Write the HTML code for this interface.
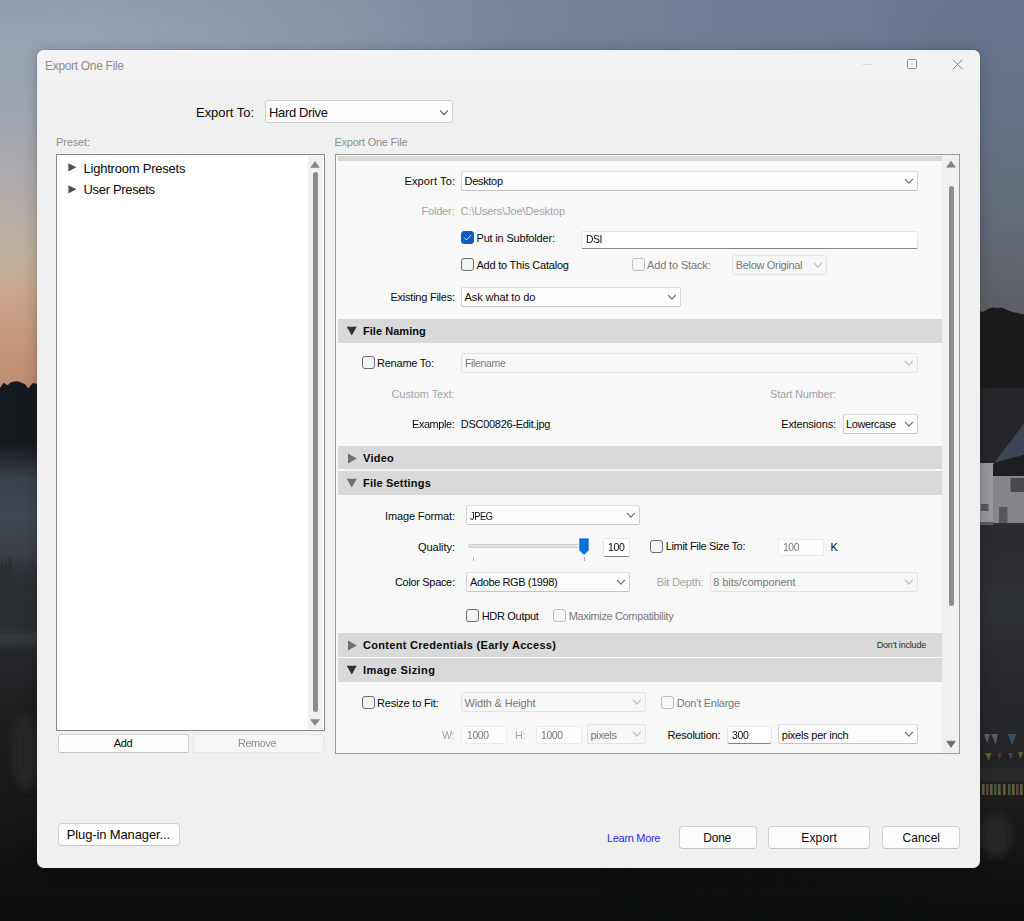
<!DOCTYPE html>
<html>
<head>
<meta charset="utf-8">
<title>Export One File</title>
<style>
*{box-sizing:border-box;margin:0;padding:0}
html,body{width:1024px;height:921px;overflow:hidden}
body{font-family:"Liberation Sans",sans-serif;position:relative;background:#15171a}
.a{position:absolute}
.t{position:absolute;white-space:pre}
#dlg{position:absolute;left:37px;top:50px;width:943px;height:818px;background:#f0f0f0;border-radius:7px;overflow:hidden;box-shadow:0 0 0 1px rgba(40,40,40,.12),0 2px 16px rgba(0,0,0,.22)}
#tbar{position:absolute;left:0;top:0;width:943px;height:30px;background:#f3f3f3}
.sel{position:absolute;background:#fdfdfd;border:1px solid #d2d2d2;border-top-color:#dedede;border-bottom-color:#c4c4c4;border-radius:2.5px}
.sel.dis{background:#f7f7f7;border-color:#e3e3e3}
.inp{position:absolute;background:#fff;border:1px solid #e6e6e6;border-bottom:1px solid #858585;border-radius:2px}
.inp.dis{background:#fdfdfd;border-color:#ebebeb}
.cb{position:absolute;width:13px;height:13px;border:1px solid #6c6c6c;border-radius:3px;background:#f4f4f4}
.cb.dis{border-color:#bcbcbc;background:#f8f8f8}
.cb.on{background:#0a5ebe;border-color:#0a5ebe}
.hdr{position:absolute;left:338px;width:604px;background:#d9d9d9}
.btn{position:absolute;background:#fdfdfd;border:1px solid #d2d2d2;border-bottom-color:#c4c4c4}
.btn.dis{background:#f6f6f6;border-color:#e6e6e6}
</style>
</head>
<body>
<svg id="bg" width="1024" height="921" viewBox="0 0 1024 921" style="position:absolute;left:0;top:0">
<defs>
<linearGradient id="skyh" x1="0" y1="0" x2="1" y2="0">
<stop offset="0" stop-color="#929eb0"/><stop offset=".25" stop-color="#8492a6"/><stop offset=".5" stop-color="#76859c"/><stop offset=".75" stop-color="#6d7d95"/><stop offset="1" stop-color="#66768f"/>
</linearGradient>
<linearGradient id="skyl" x1="0" y1="0" x2="0" y2="400" gradientUnits="userSpaceOnUse">
<stop offset="0" stop-color="#909dae"/><stop offset=".1" stop-color="#96a3b4"/><stop offset=".27" stop-color="#9ea6b1"/><stop offset=".40" stop-color="#a9aaae"/><stop offset=".53" stop-color="#b5ada6"/><stop offset=".64" stop-color="#c0af9c"/><stop offset=".725" stop-color="#c8a78f"/><stop offset=".81" stop-color="#c69d82"/><stop offset=".88" stop-color="#c29478"/><stop offset="1" stop-color="#bb8c71"/>
</linearGradient>
<linearGradient id="lfade" x1="0" y1="0" x2="520" y2="0" gradientUnits="userSpaceOnUse">
<stop offset="0" stop-color="#fff" stop-opacity="1"/><stop offset=".08" stop-color="#fff" stop-opacity="1"/><stop offset="1" stop-color="#fff" stop-opacity="0"/>
</linearGradient>
<mask id="lmask"><rect x="0" y="0" width="520" height="400" fill="url(#lfade)"/></mask>
<linearGradient id="topfade" x1="0" y1="0" x2="0" y2="120" gradientUnits="userSpaceOnUse">
<stop offset="0" stop-color="#000" stop-opacity="0"/><stop offset=".35" stop-color="#000" stop-opacity="0"/><stop offset="1" stop-color="#000" stop-opacity="0"/>
</linearGradient>
<linearGradient id="skyr" x1="0" y1="0" x2="0" y2="320" gradientUnits="userSpaceOnUse">
<stop offset="0" stop-color="#66768f"/><stop offset=".3" stop-color="#65738a"/><stop offset=".5" stop-color="#646f81"/><stop offset=".7" stop-color="#626a78"/><stop offset=".85" stop-color="#60646d"/><stop offset="1" stop-color="#5c5d63"/>
</linearGradient>
<linearGradient id="rfade" x1="880" y1="0" x2="1024" y2="0" gradientUnits="userSpaceOnUse">
<stop offset="0" stop-color="#fff" stop-opacity="0"/><stop offset=".6" stop-color="#fff" stop-opacity="1"/><stop offset="1" stop-color="#fff" stop-opacity="1"/>
</linearGradient>
<mask id="rmask"><rect x="880" y="0" width="144" height="400" fill="url(#rfade)"/></mask>
<linearGradient id="landl" x1="0" y1="380" x2="0" y2="921" gradientUnits="userSpaceOnUse">
<stop offset="0" stop-color="#151a1e"/><stop offset=".115" stop-color="#161a1e"/><stop offset=".15" stop-color="#272c33"/><stop offset=".185" stop-color="#3c424b"/><stop offset=".25" stop-color="#424852"/><stop offset=".32" stop-color="#3b4048"/><stop offset=".36" stop-color="#2c3035"/><stop offset=".46" stop-color="#2a2d31"/><stop offset=".475" stop-color="#363b40"/><stop offset=".50" stop-color="#25282b"/><stop offset=".6" stop-color="#1d1f20"/><stop offset=".75" stop-color="#181a19"/><stop offset=".9" stop-color="#0e110e"/><stop offset="1" stop-color="#0b0e0b"/>
</linearGradient>
<linearGradient id="landr" x1="0" y1="380" x2="0" y2="921" gradientUnits="userSpaceOnUse">
<stop offset="0" stop-color="#26262a"/><stop offset=".3" stop-color="#2a2c30"/><stop offset=".42" stop-color="#2d3035"/><stop offset=".55" stop-color="#27292c"/><stop offset=".7" stop-color="#222324"/><stop offset=".8" stop-color="#1b1c1a"/><stop offset=".9" stop-color="#101310"/><stop offset="1" stop-color="#0b0e0b"/>
</linearGradient>
<linearGradient id="lrfade" x1="600" y1="0" x2="1024" y2="0" gradientUnits="userSpaceOnUse">
<stop offset="0" stop-color="#fff" stop-opacity="0"/><stop offset=".8" stop-color="#fff" stop-opacity="1"/><stop offset="1" stop-color="#fff" stop-opacity="1"/>
</linearGradient>
<mask id="lrmask"><rect x="600" y="300" width="424" height="621" fill="url(#lrfade)"/></mask>
<filter id="bl" x="-50%" y="-50%" width="200%" height="200%"><feGaussianBlur stdDeviation="4"/></filter>
<filter id="bl1" x="-20%" y="-20%" width="140%" height="140%"><feGaussianBlur stdDeviation="0.6"/></filter>
</defs>
<rect x="0" y="0" width="1024" height="400" fill="url(#skyh)"/>
<rect x="0" y="0" width="520" height="400" fill="url(#skyl)" mask="url(#lmask)"/>
<rect x="880" y="0" width="144" height="400" fill="url(#skyr)" mask="url(#rmask)"/>
<rect x="0" y="389" width="1024" height="532" fill="url(#landl)"/>
<rect x="600" y="314" width="424" height="607" fill="url(#landr)" mask="url(#lrmask)"/>
<path d="M0 388 L2 385 L4 382.8 L6 384.5 L8 385 L10 382.8 L13 381.8 L17 381.2 L20 382 L22 383 L25 384 L27 387 L28.5 388.3 L30 386 L33 383 L36 383.8 L40 383 L700 383 L700 392 L0 392 Z" fill="#151a1e"/>
<path d="M0 566 L2 560 L4 566 L6 558 L8 566 L10 555 L12 565 L14 572 L18 580 L24 581 L30 580 L36 579 L40 580 L40 590 L0 590 Z" fill="#2b2f34"/>
<ellipse cx="26" cy="752" rx="14" ry="38" fill="#262826" filter="url(#bl)"/>
<path d="M975 312 L980 311 L983 312 L988 309 L992 307.6 L997 308 L1002 307.6 L1007 310 L1012 312 L1018 313 L1024 315 L1024 390 L975 390 Z" fill="#1a1c1c"/>
<rect x="975" y="388" width="49" height="90" fill="#26262a"/>
<path d="M1024 423.5 L994 463 L1024 455 Z" fill="#3c4658"/>
<path d="M987 474 L994 463 L1024 455 L1024 476 L987 476 Z" fill="#1e1e22"/>
<rect x="980" y="463" width="13" height="59" fill="#98989e"/>
<path d="M980 463 L994 463 L987 474 L980 474 Z" fill="#98989e"/>
<rect x="993" y="476" width="31" height="49" fill="#85858b"/>
<rect x="1010.5" y="478" width="14" height="14" fill="#48484e"/>
<rect x="999" y="507" width="8.5" height="18" fill="#55585c"/>
<rect x="981" y="504" width="7.5" height="7" fill="#5a5a60"/>
<rect x="975" y="523" width="49" height="18" fill="#2c2c30" opacity=".95"/>
<rect x="980" y="522" width="13" height="3" fill="#5a5a60"/>
<g filter="url(#bl1)" opacity=".62">
<path d="M984 734 L990 734 L987 743 Z M991 734 L997.5 734 L996 745 Z" fill="#7e8288"/>
<path d="M1008 734 L1016.6 734 L1012 745 Z" fill="#4a6a90"/>
<path d="M985.5 753 L991.5 753 L988.5 761 Z" fill="#85852e"/><path d="M997 753 L1002 753 L999.5 760 Z" fill="#6a3a44"/><path d="M1008 753 L1013 753 L1010.5 760 Z" fill="#4a5a7a"/><path d="M1018 752 L1023 752 L1020.5 759 Z" fill="#85852e"/>
<rect x="975" y="768" width="49" height="14" fill="#2e2e30"/>
<rect x="982" y="784" width="2.6" height="11" fill="#8a8640"/>
<rect x="986" y="784" width="2.6" height="11" fill="#7a5a68"/>
<rect x="990" y="784" width="2.6" height="11" fill="#8a8640"/>
<rect x="994" y="784" width="2.6" height="11" fill="#5a7a5a"/>
<rect x="998" y="784" width="2.6" height="11" fill="#8a8640"/>
<rect x="1003" y="784" width="2.6" height="11" fill="#8a8640"/>
<rect x="1008" y="784" width="2.6" height="11" fill="#5a7a5a"/>
<rect x="1012" y="784" width="2.6" height="11" fill="#8a8640"/>
<rect x="1016" y="784" width="2.6" height="11" fill="#7a5a68"/>
<rect x="1020" y="784" width="2.6" height="11" fill="#8a8640"/>
</g>
<ellipse cx="996" cy="836" rx="16" ry="21" fill="#282828" filter="url(#bl)"/>
</svg>
<div id="dlg"><div id="tbar"></div></div>
<div class="sel" style="left:265px;top:100px;width:188px;height:23px;border-radius:3px;border-color:#cfcfcf"></div>
<svg class="a" style="left:437px;top:107px" width="14" height="10" viewBox="0 0 14 10"><path d="M3.50 3.90 L7.00 7.70 L10.50 3.90" fill="none" stroke="#555" stroke-width="1.2" stroke-linecap="round" stroke-linejoin="round"/></svg>
<div class="a" style="left:56px;top:154px;width:269px;height:577px;background:#fff;border:1px solid #888"></div>
<div class="a" style="left:308px;top:156px;width:15px;height:573px;background:#f0f0f0"></div>
<svg class="a" style="left:310px;top:161px" width="10" height="7" viewBox="0 0 10 7"><path d="M0.6 6.6 L5 0.4 L9.4 6.6 Z" fill="#858585" stroke="#858585" stroke-width=".6" stroke-linejoin="round"/></svg>
<div class="a" style="left:313px;top:172px;width:5px;height:540px;background:#8c8c8c;border-radius:2.5px"></div>
<svg class="a" style="left:310px;top:719px" width="10" height="7" viewBox="0 0 10 7"><path d="M0.6 0.6 L9.4 0.6 L5 6.4 Z" fill="#858585" stroke="#858585" stroke-width=".6" stroke-linejoin="round"/></svg>
<svg class="a" style="left:68px;top:163px" width="9" height="9" viewBox="0 0 9 9"><path d="M0.4 0.3 L8.4 4.3 L0.4 8.4 Z" fill="#505050"/></svg>
<svg class="a" style="left:68px;top:184.5px" width="9" height="9" viewBox="0 0 9 9"><path d="M0.4 0.3 L8.4 4.3 L0.4 8.4 Z" fill="#505050"/></svg>
<div class="a" style="left:335px;top:154px;width:625px;height:600px;background:#f8f8f8;border:1px solid #999"></div>
<div class="a" style="left:942px;top:155px;width:17px;height:598px;background:#f0f0f0"></div>
<svg class="a" style="left:946px;top:160px" width="10" height="8" viewBox="0 0 10 8"><path d="M0.6 7.2 L5 1 L9.4 7.2 Z" fill="#858585" stroke="#858585" stroke-width=".6" stroke-linejoin="round"/></svg>
<div class="a" style="left:948.5px;top:186px;width:5px;height:420px;background:#8c8c8c;border-radius:2.5px"></div>
<svg class="a" style="left:946px;top:740px" width="10" height="8" viewBox="0 0 10 8"><path d="M0.6 1.2 L9.4 1.2 L5 7.4 Z" fill="#6a6a6a" stroke="#6a6a6a" stroke-width=".6" stroke-linejoin="round"/></svg>
<div class="hdr" style="top:156px;height:5px"></div>
<div class="sel" style="left:461px;top:171px;width:457px;height:20px"></div>
<svg class="a" style="left:901px;top:176px" width="14" height="10" viewBox="0 0 14 10"><path d="M4.40 3.30 L7.90 7.10 L11.40 3.30" fill="none" stroke="#6c6c6c" stroke-width="1.2" stroke-linecap="round" stroke-linejoin="round"/></svg>
<div class="cb on" style="left:461px;top:231px"></div>
<svg class="a" style="left:461px;top:231px" width="13" height="13" viewBox="0 0 13 13"><path d="M3.2 6.7 L5.5 9 L9.9 4.2" fill="none" stroke="#fff" stroke-opacity=".9" stroke-width=".95" stroke-linecap="round" stroke-linejoin="round"/></svg>
<div class="inp" style="left:581px;top:231px;width:337px;height:18px"></div>
<div class="cb " style="left:461px;top:258px"></div>
<div class="cb dis" style="left:631.5px;top:258px"></div>
<div class="sel dis" style="left:732px;top:255px;width:95px;height:20px"></div>
<svg class="a" style="left:810px;top:260px" width="14" height="10" viewBox="0 0 14 10"><path d="M4.40 3.30 L7.90 7.10 L11.40 3.30" fill="none" stroke="#bcbcbc" stroke-width="1.2" stroke-linecap="round" stroke-linejoin="round"/></svg>
<div class="sel" style="left:461px;top:287px;width:220px;height:20px"></div>
<svg class="a" style="left:664px;top:292px" width="14" height="10" viewBox="0 0 14 10"><path d="M4.40 3.30 L7.90 7.10 L11.40 3.30" fill="none" stroke="#6c6c6c" stroke-width="1.2" stroke-linecap="round" stroke-linejoin="round"/></svg>
<div class="hdr" style="top:319px;height:24px"></div>
<svg class="a" style="left:345px;top:325px" width="14" height="13" viewBox="0 0 14 13"><path d="M1.75 1.8 L11.75 1.8 L6.75 10.5 Z" fill="#333"/></svg>
<div class="cb " style="left:362px;top:356px"></div>
<div class="sel dis" style="left:461px;top:353px;width:457px;height:20px"></div>
<svg class="a" style="left:901px;top:358px" width="14" height="10" viewBox="0 0 14 10"><path d="M4.40 3.30 L7.90 7.10 L11.40 3.30" fill="none" stroke="#bcbcbc" stroke-width="1.2" stroke-linecap="round" stroke-linejoin="round"/></svg>
<div class="sel" style="left:843px;top:414px;width:75px;height:20px"></div>
<svg class="a" style="left:901px;top:419px" width="14" height="10" viewBox="0 0 14 10"><path d="M4.40 3.30 L7.90 7.10 L11.40 3.30" fill="none" stroke="#6c6c6c" stroke-width="1.2" stroke-linecap="round" stroke-linejoin="round"/></svg>
<div class="hdr" style="top:446px;height:23px"></div>
<svg class="a" style="left:347px;top:452px" width="12" height="14" viewBox="0 0 12 14"><path d="M1 1.4 L9.8 6.5 L1 11.6 Z" fill="#707070"/></svg>
<div class="hdr" style="top:471px;height:24px"></div>
<svg class="a" style="left:345px;top:477px" width="14" height="13" viewBox="0 0 14 13"><path d="M1.75 1.8 L11.75 1.8 L6.75 10.5 Z" fill="#707070"/></svg>
<div class="sel" style="left:466px;top:505px;width:174px;height:20px"></div>
<svg class="a" style="left:623px;top:510px" width="14" height="10" viewBox="0 0 14 10"><path d="M4.40 3.30 L7.90 7.10 L11.40 3.30" fill="none" stroke="#6c6c6c" stroke-width="1.2" stroke-linecap="round" stroke-linejoin="round"/></svg>
<div class="a" style="left:468px;top:544px;width:116px;height:4px;background:#e2e2e2;border:1px solid #cfcfcf;border-radius:2px"></div>
<svg class="a" style="left:578px;top:537px" width="12" height="20" viewBox="0 0 12 20"><path d="M1 1.8 Q1 1.1 1.7 1.1 L10.3 1.1 Q11 1.1 11 1.8 L11 13.5 L6 18.2 L1 13.5 Z" fill="#0672d6" stroke="#fff" stroke-opacity=".85" stroke-width=".7"/></svg>
<div class="a" style="left:473px;top:557px;width:1px;height:4px;background:#b8b8b8"></div>
<div class="a" style="left:584px;top:557px;width:1px;height:4px;background:#a8a8a8"></div>
<div class="inp" style="left:602.5px;top:538px;width:27.0px;height:19px"></div>
<div class="cb " style="left:650px;top:540px"></div>
<div class="inp dis" style="left:777.5px;top:539px;width:46.0px;height:17px"></div>
<div class="sel" style="left:466px;top:572px;width:164px;height:20px"></div>
<svg class="a" style="left:613px;top:577px" width="14" height="10" viewBox="0 0 14 10"><path d="M4.40 3.30 L7.90 7.10 L11.40 3.30" fill="none" stroke="#6c6c6c" stroke-width="1.2" stroke-linecap="round" stroke-linejoin="round"/></svg>
<div class="sel dis" style="left:710px;top:572px;width:208px;height:20px"></div>
<svg class="a" style="left:901px;top:577px" width="14" height="10" viewBox="0 0 14 10"><path d="M4.40 3.30 L7.90 7.10 L11.40 3.30" fill="none" stroke="#bcbcbc" stroke-width="1.2" stroke-linecap="round" stroke-linejoin="round"/></svg>
<div class="cb " style="left:466px;top:609px"></div>
<div class="cb dis" style="left:553px;top:609px"></div>
<div class="hdr" style="top:633px;height:24px"></div>
<svg class="a" style="left:347px;top:639px" width="12" height="14" viewBox="0 0 12 14"><path d="M1 1.4 L9.8 6.5 L1 11.6 Z" fill="#707070"/></svg>
<div class="hdr" style="top:658px;height:24px"></div>
<svg class="a" style="left:345px;top:664px" width="14" height="13" viewBox="0 0 14 13"><path d="M1.75 1.8 L11.75 1.8 L6.75 10.5 Z" fill="#333"/></svg>
<div class="cb " style="left:362px;top:696px"></div>
<div class="sel dis" style="left:461px;top:692px;width:185px;height:20px"></div>
<svg class="a" style="left:629px;top:697px" width="14" height="10" viewBox="0 0 14 10"><path d="M4.40 3.30 L7.90 7.10 L11.40 3.30" fill="none" stroke="#bcbcbc" stroke-width="1.2" stroke-linecap="round" stroke-linejoin="round"/></svg>
<div class="cb dis" style="left:661px;top:696px"></div>
<div class="inp dis" style="left:461px;top:726px;width:46px;height:18px"></div>
<div class="inp dis" style="left:535.5px;top:726px;width:46.0px;height:18px"></div>
<div class="sel dis" style="left:587px;top:724px;width:59px;height:20px"></div>
<svg class="a" style="left:629px;top:729px" width="14" height="10" viewBox="0 0 14 10"><path d="M4.40 3.30 L7.90 7.10 L11.40 3.30" fill="none" stroke="#bcbcbc" stroke-width="1.2" stroke-linecap="round" stroke-linejoin="round"/></svg>
<div class="inp" style="left:727px;top:726px;width:45px;height:18px"></div>
<div class="sel" style="left:778px;top:724px;width:140px;height:20px"></div>
<svg class="a" style="left:901px;top:729px" width="14" height="10" viewBox="0 0 14 10"><path d="M4.40 3.30 L7.90 7.10 L11.40 3.30" fill="none" stroke="#6c6c6c" stroke-width="1.2" stroke-linecap="round" stroke-linejoin="round"/></svg>
<div class="btn" style="left:58px;top:734px;width:131px;height:19px;border-radius:3px"></div>
<div class="btn dis" style="left:192.5px;top:734px;width:131.0px;height:18.5px;border-radius:3px"></div>
<div class="btn" style="left:57.5px;top:823px;width:122.5px;height:23px;border-radius:4px"></div>
<div class="btn" style="left:679px;top:826px;width:77.5px;height:23px;border-radius:4px"></div>
<div class="btn" style="left:768px;top:826px;width:102px;height:23px;border-radius:4px"></div>
<div class="btn" style="left:882px;top:826px;width:77.5px;height:23px;border-radius:4px"></div>
<div class="a" style="left:862px;top:64px;width:10px;height:1px;background:#dedede"></div>
<div class="a" style="left:907px;top:59px;width:10px;height:10px;border:1px solid #8c8c8c;border-radius:1.5px"></div>
<svg class="a" style="left:951px;top:58px" width="13" height="13" viewBox="0 0 13 13"><path d="M1.9 1.6 L11.4 11.2 M11.4 1.6 L1.9 11.2" stroke="#8a8a8a" stroke-width="1" fill="none"/></svg>
<div class="t" style="left:45.00px;top:60px;font-size:12px;line-height:12px;color:#8d8d8d;letter-spacing:-0.31px;">Export One File</div>
<div class="t" style="left:196.00px;top:106px;font-size:13px;line-height:13px;color:#0a0a0a;letter-spacing:-0.03px;">Export To:</div>
<div class="t" style="left:269.00px;top:106px;font-size:13px;line-height:13px;color:#0a0a0a;letter-spacing:-0.35px;">Hard Drive</div>
<div class="t" style="left:56.00px;top:137px;font-size:11px;line-height:11px;color:#8f8f8f;letter-spacing:-0.14px;">Preset:</div>
<div class="t" style="left:334.50px;top:137px;font-size:11px;line-height:11px;color:#8f8f8f;letter-spacing:-0.24px;">Export One File</div>
<div class="t" style="left:83.50px;top:162px;font-size:13px;line-height:13px;color:#0a0a0a;letter-spacing:-0.22px;">Lightroom Presets</div>
<div class="t" style="left:83.50px;top:183px;font-size:13px;line-height:13px;color:#0a0a0a;letter-spacing:-0.33px;">User Presets</div>
<div class="t" style="left:404.50px;top:176px;font-size:11px;line-height:11px;color:#0a0a0a;letter-spacing:0.13px;">Export To:</div>
<div class="t" style="left:464.50px;top:176px;font-size:11px;line-height:11px;color:#0a0a0a;letter-spacing:-0.31px;">Desktop</div>
<div class="t" style="left:421.50px;top:206px;font-size:11px;line-height:11px;color:#a4a4a4;letter-spacing:-0.21px;">Folder:</div>
<div class="t" style="left:460.50px;top:206px;font-size:11px;line-height:11px;color:#a4a4a4;letter-spacing:-0.13px;">C:\Users\Joe\Desktop</div>
<div class="t" style="left:476.50px;top:233px;font-size:11px;line-height:11px;color:#0a0a0a;letter-spacing:-0.18px;">Put in Subfolder:</div>
<div class="t" style="left:585.50px;top:234px;font-size:11px;line-height:11px;color:#0a0a0a;letter-spacing:-0.39px;transform:scaleX(0.9389);transform-origin:left center;">DSI</div>
<div class="t" style="left:476.50px;top:260px;font-size:11px;line-height:11px;color:#0a0a0a;letter-spacing:-0.22px;">Add to This Catalog</div>
<div class="t" style="left:647.00px;top:260px;font-size:11px;line-height:11px;color:#797979;letter-spacing:-0.14px;">Add to Stack:</div>
<div class="t" style="left:735.75px;top:260px;font-size:11px;line-height:11px;color:#797979;letter-spacing:-0.32px;">Below Original</div>
<div class="t" style="left:390.50px;top:292px;font-size:11px;line-height:11px;color:#0a0a0a;letter-spacing:-0.24px;">Existing Files:</div>
<div class="t" style="left:464.50px;top:292px;font-size:11px;line-height:11px;color:#0a0a0a;letter-spacing:-0.09px;">Ask what to do</div>
<div class="t" style="left:363.00px;top:326px;font-size:11px;line-height:11px;color:#0a0a0a;font-weight:bold;letter-spacing:0.04px;">File Naming</div>
<div class="t" style="left:377.00px;top:358px;font-size:11px;line-height:11px;color:#0a0a0a;letter-spacing:-0.23px;">Rename To:</div>
<div class="t" style="left:464.50px;top:358px;font-size:11px;line-height:11px;color:#797979;letter-spacing:-0.39px;transform:scaleX(0.9635);transform-origin:left center;">Filename</div>
<div class="t" style="left:391.50px;top:389px;font-size:11px;line-height:11px;color:#a4a4a4;letter-spacing:-0.09px;">Custom Text:</div>
<div class="t" style="left:770.00px;top:389px;font-size:11px;line-height:11px;color:#a4a4a4;letter-spacing:-0.21px;">Start Number:</div>
<div class="t" style="left:411.75px;top:419px;font-size:11px;line-height:11px;color:#0a0a0a;letter-spacing:-0.39px;transform:scaleX(0.9904);transform-origin:left center;">Example:</div>
<div class="t" style="left:460.75px;top:419px;font-size:11px;line-height:11px;color:#0a0a0a;letter-spacing:-0.28px;">DSC00826-Edit.jpg</div>
<div class="t" style="left:781.25px;top:419px;font-size:11px;line-height:11px;color:#0a0a0a;letter-spacing:-0.21px;">Extensions:</div>
<div class="t" style="left:846.00px;top:419px;font-size:11px;line-height:11px;color:#0a0a0a;letter-spacing:-0.37px;">Lowercase</div>
<div class="t" style="left:363.00px;top:453px;font-size:11px;line-height:11px;color:#0a0a0a;font-weight:bold;letter-spacing:0.25px;">Video</div>
<div class="t" style="left:363.00px;top:478px;font-size:11px;line-height:11px;color:#0a0a0a;font-weight:bold;letter-spacing:0.2px;">File Settings</div>
<div class="t" style="left:385.00px;top:511px;font-size:11px;line-height:11px;color:#0a0a0a;letter-spacing:-0.13px;">Image Format:</div>
<div class="t" style="left:470.00px;top:511px;font-size:11px;line-height:11px;color:#0a0a0a;letter-spacing:-0.39px;transform:scaleX(0.834);transform-origin:left center;">JPEG</div>
<div class="t" style="left:418.00px;top:542px;font-size:11px;line-height:11px;color:#0a0a0a;letter-spacing:-0.04px;">Quality:</div>
<div class="t" style="left:608.40px;top:542px;font-size:11px;line-height:11px;color:#0a0a0a;letter-spacing:-0.39px;transform:scaleX(0.9551);transform-origin:left center;">100</div>
<div class="t" style="left:665.75px;top:541px;font-size:11px;line-height:11px;color:#0a0a0a;letter-spacing:-0.35px;">Limit File Size To:</div>
<div class="t" style="left:783.00px;top:542px;font-size:11px;line-height:11px;color:#797979;letter-spacing:-0.39px;transform:scaleX(0.9381);transform-origin:left center;">100</div>
<div class="t" style="left:830.50px;top:542px;font-size:11px;line-height:11px;color:#0a0a0a;letter-spacing:0.16px;">K</div>
<div class="t" style="left:395.00px;top:577px;font-size:11px;line-height:11px;color:#0a0a0a;letter-spacing:-0.33px;">Color Space:</div>
<div class="t" style="left:470.00px;top:577px;font-size:11px;line-height:11px;color:#0a0a0a;letter-spacing:-0.39px;">Adobe RGB (1998)</div>
<div class="t" style="left:656.75px;top:577px;font-size:11px;line-height:11px;color:#a4a4a4;letter-spacing:-0.15px;">Bit Depth:</div>
<div class="t" style="left:713.25px;top:577px;font-size:11px;line-height:11px;color:#797979;letter-spacing:-0.09px;">8 bits/component</div>
<div class="t" style="left:481.75px;top:611px;font-size:11px;line-height:11px;color:#0a0a0a;letter-spacing:-0.32px;">HDR Output</div>
<div class="t" style="left:568.75px;top:611px;font-size:11px;line-height:11px;color:#797979;letter-spacing:-0.36px;">Maximize Compatibility</div>
<div class="t" style="left:363.00px;top:640px;font-size:11px;line-height:11px;color:#0a0a0a;font-weight:bold;letter-spacing:0.3px;">Content Credentials (Early Access)</div>
<div class="t" style="left:876.75px;top:641px;font-size:9px;line-height:9px;color:#2a2a2a;letter-spacing:-0.19px;">Don&#x27;t include</div>
<div class="t" style="left:363.00px;top:665px;font-size:11px;line-height:11px;color:#0a0a0a;font-weight:bold;letter-spacing:0.43px;">Image Sizing</div>
<div class="t" style="left:377.00px;top:698px;font-size:11px;line-height:11px;color:#0a0a0a;letter-spacing:-0.19px;">Resize to Fit:</div>
<div class="t" style="left:464.50px;top:698px;font-size:11px;line-height:11px;color:#797979;letter-spacing:-0.18px;">Width &amp; Height</div>
<div class="t" style="left:676.75px;top:698px;font-size:11px;line-height:11px;color:#797979;letter-spacing:-0.28px;">Don’t Enlarge</div>
<div class="t" style="left:442.00px;top:730px;font-size:11px;line-height:11px;color:#a4a4a4;letter-spacing:-0.39px;transform:scaleX(0.9716);transform-origin:left center;">W:</div>
<div class="t" style="left:466.75px;top:730px;font-size:11px;line-height:11px;color:#797979;letter-spacing:-0.39px;transform:scaleX(0.943);transform-origin:left center;">1000</div>
<div class="t" style="left:515.00px;top:730px;font-size:11px;line-height:11px;color:#a4a4a4;letter-spacing:-0.39px;transform:scaleX(0.9892);transform-origin:left center;">H:</div>
<div class="t" style="left:540.75px;top:730px;font-size:11px;line-height:11px;color:#797979;letter-spacing:-0.39px;transform:scaleX(0.943);transform-origin:left center;">1000</div>
<div class="t" style="left:590.50px;top:730px;font-size:11px;line-height:11px;color:#797979;letter-spacing:-0.33px;">pixels</div>
<div class="t" style="left:667.50px;top:730px;font-size:11px;line-height:11px;color:#0a0a0a;letter-spacing:-0.2px;">Resolution:</div>
<div class="t" style="left:732.00px;top:730px;font-size:11px;line-height:11px;color:#0a0a0a;letter-spacing:-0.39px;transform:scaleX(0.9523);transform-origin:left center;">300</div>
<div class="t" style="left:781.75px;top:730px;font-size:11px;line-height:11px;color:#0a0a0a;letter-spacing:-0.24px;">pixels per inch</div>
<div class="t" style="left:113.75px;top:738px;font-size:11px;line-height:11px;color:#0a0a0a;letter-spacing:-0.39px;">Add</div>
<div class="t" style="left:238.25px;top:738px;font-size:11px;line-height:11px;color:#8e8e8e;letter-spacing:-0.39px;transform:scaleX(0.9861);transform-origin:left center;">Remove</div>
<div class="t" style="left:66.75px;top:828px;font-size:13px;line-height:13px;color:#0a0a0a;letter-spacing:-0.13px;">Plug-in Manager...</div>
<div class="t" style="left:607.00px;top:833px;font-size:11px;line-height:11px;color:#2a2aee;letter-spacing:-0.31px;">Learn More</div>
<div class="t" style="left:703.25px;top:832px;font-size:12px;line-height:12px;color:#0a0a0a;letter-spacing:-0.23px;">Done</div>
<div class="t" style="left:801.25px;top:832px;font-size:12px;line-height:12px;color:#0a0a0a;letter-spacing:0.16px;">Export</div>
<div class="t" style="left:902.50px;top:832px;font-size:12px;line-height:12px;color:#0a0a0a;letter-spacing:0.03px;">Cancel</div>
</body>
</html>
